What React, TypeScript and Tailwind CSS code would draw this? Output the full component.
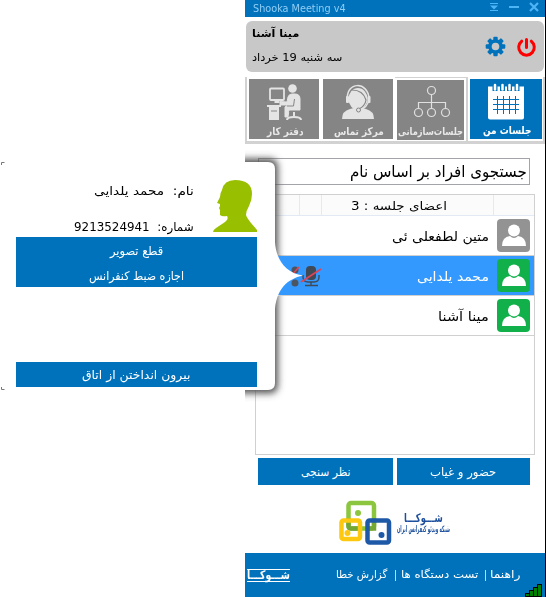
import { useLayoutEffect, useRef, useState } from 'react';
import type { ReactNode } from 'react';

/** One line of text, condensed or widened to the width of its box. */
function FitText({ children, className = '', ltr = false }: { children: ReactNode; className?: string; ltr?: boolean }) {
  const inner = useRef<HTMLSpanElement>(null);
  const [scale, setScale] = useState(1);
  useLayoutEffect(() => {
    const el = inner.current;
    if (el && el.parentElement) setScale(el.parentElement.clientWidth / el.offsetWidth);
  }, []);
  return (
    <span dir={ltr ? 'ltr' : 'rtl'} className={`flex shrink-0 ${className}`}>
      <span
        ref={inner}
        className={`inline-block shrink-0 whitespace-pre ${ltr ? 'origin-left' : 'origin-right'}`}
        style={{ transform: `scaleX(${scale})` }}
      >
        {children}
      </span>
    </span>
  );
}

function TitleBar() {
  return (
    <div className="flex h-[17px] items-center bg-[#0072bc] pl-2 text-[#8fcdf5]">
      <FitText ltr className="w-[93px] text-[11px] leading-[16px]">Shooka Meeting v4</FitText>
      <svg className="ml-auto h-[17px] w-[60px]" viewBox="485 0 60 17">
        <path d="M490 3.500h8M490 10.500h8" stroke="#4db4f5" />
        <path d="M490 5.500h8l-4 4z" fill="#4db4f5" />
        <path d="M509 7h10" stroke="#4db4f5" strokeWidth="2" />
        <path d="M530 3l8 8m0-8l-8 8" stroke="#4db4f5" strokeWidth="2.200" />
      </svg>
    </div>
  );
}

function UserCard() {
  return (
    <div className="mt-1 ml-px flex h-[51px] w-[298px] items-center rounded-md bg-[#c8c8c8] pl-[6px]">
      <div className="flex h-full flex-col pt-[4px]">
        <FitText className="w-[47px] text-[11px] leading-[18px] font-bold">مینا آشنا</FitText>
        <FitText className="mt-[7px] w-[90px] text-[11px] leading-[16px]">سه شنبه 19 خرداد</FitText>
      </div>
      <svg className="ml-auto h-[24px] w-[60px]" viewBox="484 36 60 24">
        <g fill="#0072bc">
          <circle cx="495.500" cy="47.500" r="7.300" />
          {[0, 45, 90, 135].map((a) => (
            <rect key={a} x="493.300" y="37.700" width="4.400" height="19.600" rx="1" transform={`rotate(${a} 495.500 47.500)`} />
          ))}
        </g>
        <circle cx="495.500" cy="47.500" r="3.800" fill="#c8c8c8" />
        <path d="M521.700 42.200a7.800 7.800 0 1 0 9.600 0M526.500 40.500v8" fill="none" stroke="#f00" strokeWidth="3" strokeLinecap="round" />
      </svg>
    </div>
  );
}

function DeskIcon() {
  return (
    <svg className="h-9 w-9" viewBox="267 84 36 36" fill="none" stroke="#e4e4e4">
      <rect x="271" y="88.500" width="14" height="11.500" rx="1" strokeWidth="1.800" />
      <path d="M278 100v3" strokeWidth="5" />
      <path d="M268 105h14v2h-2v13h-10v-13h-2z" fill="#e4e4e4" stroke="none" />
      <path d="M272 111h6" stroke="#858585" />
      <circle cx="293.500" cy="88.500" r="4.300" fill="#e4e4e4" stroke="none" />
      <path d="M281 101.500l7 .5 1-5q1-3 4-3h3q5 0 5 5v11h-11l-1 7h-3v-10l3-2h-8z" fill="#e4e4e4" strokeWidth="1" strokeLinejoin="round" />
      <path d="M288 106h6.500l1-7M290 111.500h12" stroke="#858585" />
      <path d="M295 112v4M288 120q0-3 7-3t7 3" strokeWidth="2" />
    </svg>
  );
}

function HeadsetIcon() {
  return (
    <svg className="h-9 w-9" viewBox="340 85 36 36">
      <path d="M342 120q0-8 8-10l4-1h8l4 1q8 2 8 10z" fill="#e4e4e4" />
      <ellipse cx="358" cy="100" rx="9.500" ry="11" fill="#e4e4e4" />
      <path d="M352 91q11 0 14 10-1 6-7 9" fill="none" stroke="#858585" strokeWidth="1.200" />
      <path d="M347.500 101c-2-19 21-19 21.500-1-1 7-5 10-10 11.500" fill="none" stroke="#e4e4e4" strokeWidth="1.500" />
      <rect x="346" y="97" width="3" height="7" rx="1" fill="#e4e4e4" />
      <rect x="367.500" y="97" width="3" height="7" rx="1" fill="#e4e4e4" />
      <circle cx="358.500" cy="111" r="2" fill="#e4e4e4" stroke="#858585" />
    </svg>
  );
}

function OrgIcon() {
  return (
    <svg className="h-9 w-10" viewBox="412 84 40 36" fill="none" stroke="#e0e0e0" strokeWidth="1.200">
      <circle cx="432.500" cy="90.500" r="4" />
      <circle cx="419.500" cy="112.500" r="4" />
      <circle cx="432.500" cy="112.500" r="4" />
      <circle cx="446.500" cy="112.500" r="4" />
      <path d="M432.500 95v13M419.500 108v-5.500h27v5.500" />
    </svg>
  );
}

function CalendarIcon() {
  return (
    <svg className="h-10 w-10" viewBox="486 80 40 40" fill="none">
      <path d="M488 85.500h36v31q0 2-2 2h-32q-2 0-2-2z" fill="#fff" />
      <path d="M493 98.500h26M493 103.500h26M493 108.500h26M497.500 95v18M503.500 95v18M509.500 95v18M515.500 95v18" stroke="#0072bc" />
      {[495, 502.5, 509.5, 517].map((x) => (
        <g key={x}>
          <rect x={x - 2.5} y="84" width="5" height="6" fill="#0072bc" />
          <path d={`M${x} 84v4.500`} stroke="#fff" strokeWidth="2.500" strokeLinecap="round" />
        </g>
      ))}
    </svg>
  );
}

function Tabs() {
  return (
    <div className="mt-[5px] flex h-[67px] border-b-[3px] border-l-2 border-[#d2d2d2] pt-[2px] pl-[2px] text-[#e8e8e8]">
      <div className="flex h-[60px] w-[70px] flex-col items-center bg-[#858585] pt-[5px]">
        <DeskIcon />
        <FitText className="mt-[4px] ml-[3px] w-[37px] text-[10.500px] leading-[14px] font-bold">دفتر کار</FitText>
      </div>
      <div className="ml-1 flex h-[60px] w-[70px] flex-col items-center bg-[#858585] pt-[5px]">
        <HeadsetIcon />
        <FitText className="mt-[4px] ml-[2px] w-[50px] text-[10.500px] leading-[14px] font-bold">مرکز تماس</FitText>
      </div>
      <div className="-mt-[2px] ml-[2px] flex h-[64px] w-[73px] shrink-0 flex-col border-t border-r-2 border-[#d2d2d2] bg-white pt-[2px] pl-[2px]">
        <div className="flex h-[60px] w-[67px] flex-col items-center bg-[#858585] pt-[4px]">
          <OrgIcon />
          <FitText className="mt-[4px] w-[65px] text-[10.500px] leading-[14px] font-bold">جلسات‌سازمانی</FitText>
        </div>
      </div>
      <div className="ml-[2px] flex h-[60px] w-[72px] flex-col items-center bg-[#0072bc] pt-[2px] text-white">
        <CalendarIcon />
        <FitText className="mt-[3px] ml-[3px] w-[48px] text-[11px] leading-[14px] font-bold">جلسات من</FitText>
      </div>
      <div className="-mt-[2px] ml-auto h-[64px] w-[2px] bg-[#d2d2d2]" />
    </div>
  );
}

function Avatar({ className }: { className: string }) {
  return (
    <div className={`h-[33px] w-[33px] rounded-[4px] ${className}`}>
      <svg viewBox="0 0 33 33" fill="#fff">
        <circle cx="17" cy="11.500" r="6" />
        <path d="M5 27q0-9 8-10 4 4 8 0 8 1 8 10z" />
      </svg>
    </div>
  );
}

function MutedDevices() {
  return (
    <svg className="mr-auto h-[22px] w-[36px]" viewBox="290 264 36 22">
      <circle cx="295" cy="269" r="3.500" fill="#4d5660" />
      <circle cx="295" cy="282" r="3.500" fill="#4d5660" />
      <path d="M291 275l8-9" stroke="#e34452" strokeWidth="1.500" />
      <rect x="306" y="265" width="10" height="14" rx="4" fill="#404a56" />
      <path d="M303 274v2q0 5 5 5h6q5 0 5-5v-2M311 281v4M305 284.500h13" fill="none" stroke="#404a56" strokeWidth="1.400" />
      <path d="M301 281l20-13" stroke="#df4554" strokeWidth="1.600" />
    </svg>
  );
}

function Members() {
  return (
    <div className="mt-[9px] ml-[10px] h-[261px] w-[280px] border border-[#d0d0d0] text-[13px]">
      <div className="flex h-[21px] border-b border-[#e2eaf5] bg-[#fbfbfb]">
        <div className="w-[44px] border-r border-[#e2eaf5]" />
        <div className="w-[22px] border-r border-[#e2eaf5]" />
        <div className="flex w-[172px] items-center border-r border-[#e2eaf5] pt-px pl-[29px]">
          <FitText className="w-[96px] text-[12px] leading-[18px]">اعضای جلسه : 3</FitText>
        </div>
      </div>
      <div className="flex h-[40px] items-center justify-end gap-2 border-b border-[#d0d0d0] pr-1">
        <FitText className="mt-[3px] w-[97px] leading-[20px]">متین لطفعلی ئی</FitText>
        <Avatar className="bg-[#939393]" />
      </div>
      <div className="flex h-[40px] items-center justify-end gap-2 border-b border-[#d0d0d0] bg-[#3399ff] pr-1 pl-[34px] text-white">
        <MutedDevices />
        <FitText className="mt-[3px] w-[72px] leading-[20px]">محمد یلدایی</FitText>
        <Avatar className="bg-[#12b04b]" />
      </div>
      <div className="flex h-[40px] items-center justify-end gap-2 border-b border-[#d0d0d0] pr-1">
        <FitText className="mt-[3px] w-[51px] leading-[20px]">مینا آشنا</FitText>
        <Avatar className="bg-[#12b04b]" />
      </div>
    </div>
  );
}

function Brand() {
  return (
    <div className="mt-[15px] ml-[93px] flex h-[46px] items-center text-[#1d4f9c]">
      <svg className="h-[46px] w-[54px]" viewBox="338 500 54 46" fill="none" strokeWidth="4.500">
        <rect x="348.500" y="503" width="25.500" height="25.500" rx="2.500" stroke="#8cc63e" />
        <path d="M348.500 518v8q0 2.500 2.500 2.500h9M374 518v10.500h-6" stroke="#75a735" />
        <rect x="341.500" y="520.500" width="18.500" height="18.500" rx="2" stroke="#fdc910" />
        <rect x="367.500" y="520.500" width="21.500" height="22" rx="2" stroke="#1e59a7" />
        <circle cx="358" cy="513" r="3" fill="#8cc63e" />
        <circle cx="347.500" cy="533" r="3" fill="#fdc910" />
        <circle cx="381.500" cy="535" r="3" fill="#1e59a7" />
      </svg>
      <div className="ml-[5px] flex flex-col items-end">
        <FitText className="mr-[7px] w-[39px] text-[12px] leading-[12px] font-bold">شـــوکـــا</FitText>
        <FitText className="w-[53px] text-[9px] leading-[10px] font-bold">شبکه ویدئو کنفرانس ایران</FitText>
      </div>
    </div>
  );
}

function Footer() {
  return (
    <div className="relative mt-[7px] flex h-[44px] items-center bg-[#0072bc] pl-[2px] text-[11px] text-white">
      <div className="flex h-[13px] items-center border-y border-white">
        <FitText className="w-[43px] text-[12px] leading-[11px] font-bold">شـــوکـــا</FitText>
      </div>
      <FitText className="ml-[46px] w-[51px] leading-[18px]">گزارش خطا</FitText>
      <span className="ml-[8px] h-[11px] w-px bg-[#f3c9bb]" />
      <FitText className="ml-[5px] w-[77px] leading-[18px]">تست دستگاه ها</FitText>
      <span className="ml-[7px] h-[11px] w-px bg-[#f3c9bb]" />
      <FitText className="ml-[4px] w-[30px] leading-[18px]">راهنما</FitText>
      <svg className="absolute right-[2px] bottom-0 h-[14px] w-[18px]" viewBox="525 583 18 14" fill="#008000" stroke="#000">
        <rect x="525.500" y="593.500" width="4" height="3" />
        <rect x="529.500" y="590.500" width="4" height="6" />
        <rect x="533.500" y="587.500" width="4" height="9" />
        <rect x="537.500" y="584.500" width="4" height="12" />
      </svg>
    </div>
  );
}

function MemberPopup() {
  return (
    <div className="absolute top-[150px] left-0 h-[255px] w-[306px]">
      <svg className="absolute inset-0 h-[255px] w-[306px]" viewBox="0 150 306 255">
        <defs>
          <filter id="soft" x="-20%" y="-20%" width="140%" height="140%">
            <feGaussianBlur stdDeviation="3.500" />
          </filter>
          <clipPath id="outside">
            <path d="M245 150h61v106h-61zM245 296h61v109h-61z" />
          </clipPath>
        </defs>
        <g clipPath="url(#outside)">
          <rect x="180" y="158.500" width="98" height="235" rx="8" fill="#555" filter="url(#soft)" />
        </g>
        <path
          d="M0 162H268Q275 162 275 169V242C276 259 285 273 303 275.500C287 279 277 289 275 309V383Q275 390 268 390H0Z"
          fill="#fff"
        />
        <path d="M1.500 165v-2.500h3M1.500 387v2.500h3" fill="none" stroke="#777" />
      </svg>
      <div className="relative flex w-[257px] flex-col pt-[29px] pl-4">
        <div className="flex h-[58px] justify-end">
          <div className="flex flex-col items-end">
            <FitText className="w-[100px] text-[12px] leading-[24px]">نام:  محمد یلدایی</FitText>
            <FitText className="mt-[12px] w-[120px] text-[12px] leading-[24px]">شماره:  9213524941</FitText>
          </div>
          <svg className="-mr-px ml-[18px] h-[54px] w-[46px]" viewBox="212 179 46 54">
            <path
              d="M213 232q0-2 3-4l9-6q4-3 2-6-5 1-7-1v-5l-1-2 1-2v-2l-3-1 3-6q0-4 2-7 2-10 13-10 17 0 17 14 0 6-3 12-3 5-3 9 1 3 5 8l6 7v2z"
              fill="#99c000"
            />
          </svg>
        </div>
        <div className="flex h-[50px] flex-col items-center bg-[#0072bc] text-[12px] text-white">
          <FitText className="mt-[2px] w-[53px] leading-[24px]">قطع تصویر</FitText>
          <FitText className="mt-px w-[95px] leading-[24px]">اجازه ضبط کنفرانس</FitText>
        </div>
        <div className="mt-[75px] flex h-[25px] items-center justify-center bg-[#0072bc] text-[12px] text-white">
          <FitText className="w-[108px] leading-[24px]">بیرون انداختن از اتاق</FitText>
        </div>
      </div>
    </div>
  );
}

export default function App() {
  return (
    <div className="relative h-[597px] w-[546px] overflow-hidden bg-white font-['DejaVu_Sans_Condensed','DejaVu_Sans',sans-serif] text-black">
      <main className="ml-[245px] h-[597px] w-[301px] border-r border-black">
        <TitleBar />
        <UserCard />
        <Tabs />
        <div className="mt-[14px] ml-[13px] flex h-[27px] w-[272px] items-center justify-end border border-[#a3a3aa] pr-[2px]">
          <FitText className="w-[177px] text-[16px] leading-[24px]">جستجوی افراد بر اساس نام</FitText>
        </div>
        <Members />
        <div className="mt-[3px] ml-[13px] flex h-[27px] gap-1 text-[12px] text-white">
          <div className="flex w-[135px] items-center justify-center bg-[#0072bc]">
            <FitText className="w-[50px] leading-[24px]">نظر سنجی</FitText>
          </div>
          <div className="flex w-[133px] items-center justify-center bg-[#0072bc]">
            <FitText className="w-[66px] leading-[24px]">حضور و غیاب</FitText>
          </div>
        </div>
        <Brand />
        <Footer />
      </main>
      <MemberPopup />
    </div>
  );
}
